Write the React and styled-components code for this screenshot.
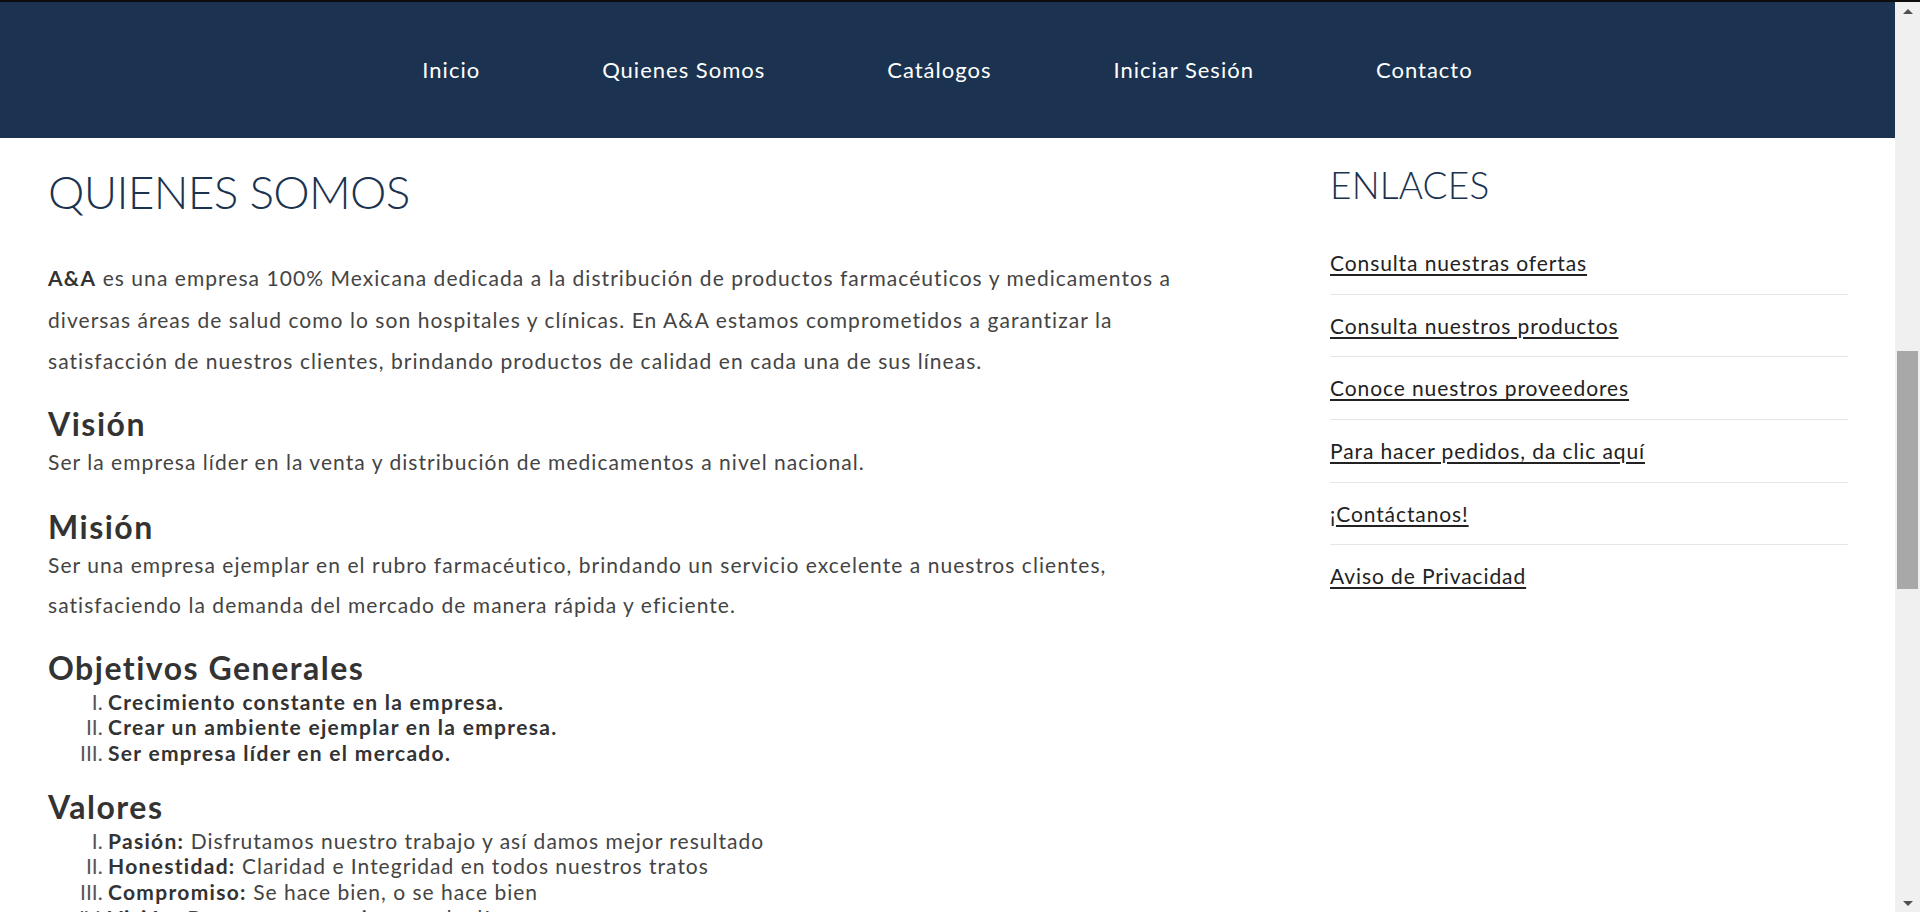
import styled, { createGlobalStyle } from "styled-components";

const GlobalStyle = createGlobalStyle`
    html, body {
        margin: 0;
        padding: 0;
        overflow: hidden;
    }
    body {
        font-family: Lato, "Open Sans", sans-serif;
        color: #333333;
        background: #ffffff;
    }
`;

const Frame = styled.div`
    display: flex;
    height: 912px;
    border-top: 2px solid #0d0d0d;
    box-sizing: border-box;
    overflow: hidden;
`;

const Page = styled.div`
    flex: 1;
    min-width: 0;
    display: flex;
    flex-direction: column;
`;

const NavBar = styled.nav`
    flex-shrink: 0;
    height: 134px;
    background-color: #1b3350;
    display: flex;
    justify-content: center;
    align-items: center;
    gap: 122px;
    padding-bottom: 2px;

    a {
        color: #ffffff;
        font-size: 22px;
        font-weight: 400;
        text-decoration: none;
        letter-spacing: 1px;
    }
`;

const Content = styled.div`
    display: grid;
    grid-template-columns: 1152px 518px;
    column-gap: 130px;
    padding: 0 47px 0 48px;
`;

const Main = styled.main`
    h1 {
        margin: 26px 0 0;
        font-size: 46px;
        line-height: 56px;
        font-weight: 300;
        color: #1b3350;
        letter-spacing: -0.7px;
    }
`;

const Lead = styled.p`
    margin: 37px 0 0;
    font-size: 21px;
    line-height: 41.5px;
    font-weight: 400;
    color: #444444;
    letter-spacing: 1.05px;

    strong {
        color: #333333;
        font-weight: 700;
    }
`;

const Section = styled.section`
    margin-top: ${(p) => p.$top || 22}px;

    h2 {
        margin: 0;
        font-size: 32px;
        line-height: 36px;
        font-weight: 700;
        color: #333333;
        letter-spacing: 1.5px;
    }
`;

const Text = styled.p`
    margin: 0;
    font-size: 21px;
    line-height: 40px;
    color: #444444;
    letter-spacing: 1.05px;
`;

const RomanList = styled.ol`
    list-style: upper-roman;
    margin: 3px 0 0;
    padding-left: 60px;
    font-size: 21px;
    line-height: 25.7px;
    color: #444444;
    letter-spacing: 1px;

    li::marker {
        color: #555555;
        letter-spacing: 0;
    }

    strong {
        color: #333333;
        font-weight: 700;
        letter-spacing: 1.3px;
    }
`;

const Aside = styled.aside`
    h3 {
        margin: 24px 0 0;
        font-size: 37px;
        line-height: 46px;
        font-weight: 300;
        color: #1b3350;
        letter-spacing: 0.2px;
    }
`;

const LinkList = styled.ul`
    list-style: none;
    margin: 24px 0 0;
    padding: 0;

    li {
        padding: 17.85px 0;
        font-size: 21px;
        line-height: 26px;
        border-bottom: 1px solid #e6e6e6;
    }

    li:last-child {
        border-bottom: none;
    }

    a {
        color: #222222;
        text-decoration: underline;
        text-underline-offset: 3px;
        letter-spacing: 0.9px;
    }
`;

const ScrollBar = styled.div`
    width: 25px;
    background: #f0f0f0;
    display: flex;
    flex-direction: column;
    align-items: center;
    justify-content: space-between;
    padding: 7px 0 6px;
    box-sizing: border-box;
    position: relative;
`;

const Arrow = styled.span`
    width: 0;
    height: 0;
    border-left: 5px solid transparent;
    border-right: 5px solid transparent;
    ${(p) =>
        p.$down
            ? "border-top: 5px solid #505050;"
            : "border-bottom: 5px solid #505050;"}
`;

const Thumb = styled.div`
    position: absolute;
    left: 2px;
    right: 2px;
    top: 349px;
    height: 238px;
    background: #a8a8a8;
`;

const navItems = ["Inicio", "Quienes Somos", "Catálogos", "Iniciar Sesión", "Contacto"];

const links = [
    "Consulta nuestras ofertas",
    "Consulta nuestros productos",
    "Conoce nuestros proveedores",
    "Para hacer pedidos, da clic aquí",
    "¡Contáctanos!",
    "Aviso de Privacidad",
];

const objetivos = [
    "Crecimiento constante en la empresa.",
    "Crear un ambiente ejemplar en la empresa.",
    "Ser empresa líder en el mercado.",
];

const valores = [
    { name: "Pasión:", text: "Disfrutamos nuestro trabajo y así damos mejor resultado" },
    { name: "Honestidad:", text: "Claridad e Integridad en todos nuestros tratos" },
    { name: "Compromiso:", text: "Se hace bien, o se hace bien" },
    { name: "Visión:", text: "Buscamos ser mejores cada día" },
];

const App = () => {
    return (
        <>
            <GlobalStyle />
            <Frame>
                <Page>
                    <NavBar>
                        {navItems.map((item) => (
                            <a key={item} href="#">{item}</a>
                        ))}
                    </NavBar>
                    <Content>
                        <Main>
                            <h1>QUIENES SOMOS</h1>
                            <Lead>
                                <strong>A&amp;A</strong> es una empresa 100% Mexicana dedicada a la distribución de productos farmacéuticos y medicamentos a diversas áreas de salud como lo son hospitales y clínicas. En A&amp;A estamos comprometidos a garantizar la satisfacción de nuestros clientes, brindando productos de calidad en cada una de sus líneas.
                            </Lead>
                            <Section $top={24}>
                                <h2>Visión</h2>
                                <Text>Ser la empresa líder en la venta y distribución de medicamentos a nivel nacional.</Text>
                            </Section>
                            <Section $top={27}>
                                <h2>Misión</h2>
                                <Text>
                                    Ser una empresa ejemplar en el rubro farmacéutico, brindando un servicio excelente a nuestros clientes, satisfaciendo la demanda del mercado de manera rápida y eficiente.
                                </Text>
                            </Section>
                            <Section $top={25}>
                                <h2>Objetivos Generales</h2>
                                <RomanList>
                                    {objetivos.map((o) => (
                                        <li key={o}><strong>{o}</strong></li>
                                    ))}
                                </RomanList>
                            </Section>
                            <Section $top={23}>
                                <h2>Valores</h2>
                                <RomanList>
                                    {valores.map((v) => (
                                        <li key={v.name}><strong>{v.name}</strong> {v.text}</li>
                                    ))}
                                </RomanList>
                            </Section>
                        </Main>
                        <Aside>
                            <h3>ENLACES</h3>
                            <LinkList>
                                {links.map((l) => (
                                    <li key={l}><a href="#">{l}</a></li>
                                ))}
                            </LinkList>
                        </Aside>
                    </Content>
                </Page>
                <ScrollBar>
                    <Arrow />
                    <Thumb />
                    <Arrow $down />
                </ScrollBar>
            </Frame>
        </>
    );
};

export default App;
